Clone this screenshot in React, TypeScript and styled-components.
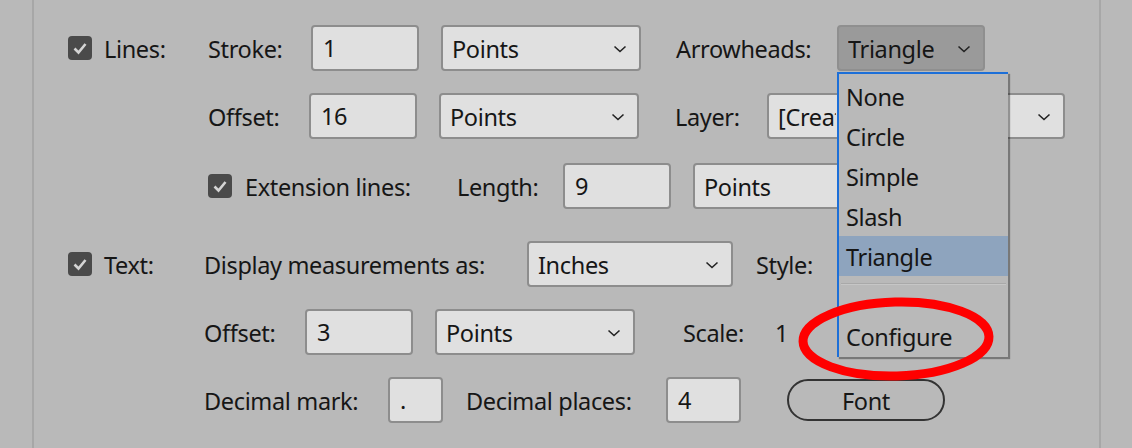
import React from 'react';
import styled, { createGlobalStyle } from 'styled-components';

const GlobalStyle = createGlobalStyle`
  html, body {
    margin: 0;
    padding: 0;
    background: #b9b9b9;
  }
  * {
    box-sizing: border-box;
  }
`;

const Chevron = () => (
  <svg width="14" height="8" viewBox="0 0 14 8">
    <path d="M1.5 1.5 L7 6.5 L12.5 1.5" fill="none" stroke="#222" strokeWidth="1.6" />
  </svg>
);

const CheckBox = ({ gap = 12 }: { gap?: number }) => (
  <CheckSquare $gap={gap}>
    <svg width="24" height="24" viewBox="0 0 24 24">
      <path d="M6.5 12.5 L10.5 16.5 L17.5 8" fill="none" stroke="#d4d4d4" strokeWidth="2.6" />
    </svg>
  </CheckSquare>
);

const SelectBox = ({
  value,
  w,
  dark,
  after,
  clip,
}: {
  value: string;
  w: number;
  dark?: boolean;
  after?: number;
  clip?: number;
}) => (
  <Select $w={w} $dark={dark} $after={after}>
    <SelectText $clip={clip}>{value}</SelectText>
    <Chevron />
  </Select>
);

const menuItems = ['None', 'Circle', 'Simple', 'Slash', 'Triangle'];

const App = () => {
  return (
    <>
      <GlobalStyle />
      <Page>
        <Panel>
          <Row $top={0} $indent={34}>
            <CheckBox />
            <Label $w={104}>Lines:</Label>
            <Label $w={103}>Stroke:</Label>
            <Input $w={108} $after={22}>1</Input>
            <SelectBox value="Points" w={200} after={35} />
            <Label $w={161}>Arrowheads:</Label>
            <SelectBox value="Triangle" w={148} dark />
          </Row>
          <Row $top={22} $indent={174}>
            <Label $w={101}>Offset:</Label>
            <Input $w={108} $after={22}>16</Input>
            <SelectBox value="Points" w={200} after={36} />
            <Label $w={92}>Layer:</Label>
            <SelectBox value="[Create New Layer]" w={298} clip={58} />
          </Row>
          <Row $top={24} $indent={174}>
            <CheckBox gap={13} />
            <Label $w={212}>Extension lines:</Label>
            <Label $w={106}>Length:</Label>
            <Input $w={108} $after={22}>9</Input>
            <SelectBox value="Points" w={200} />
          </Row>
          <Row $top={32} $indent={34}>
            <CheckBox />
            <Label $w={100}>Text:</Label>
            <Label $w={323}>Display measurements as:</Label>
            <SelectBox value="Inches" w={206} after={23} />
            <Label>Style:</Label>
          </Row>
          <Row $top={22} $indent={170}>
            <Label $w={101}>Offset:</Label>
            <Input $w={108} $after={22}>3</Input>
            <SelectBox value="Points" w={200} after={48} />
            <Label $w={92}>Scale:</Label>
            <Label>1</Label>
          </Row>
          <Row $top={22} $indent={170}>
            <Label $w={184}>Decimal mark:</Label>
            <Input $w={55} $after={23}>.</Input>
            <Label $w={200}>Decimal places:</Label>
            <Input $w={75} $after={46}>4</Input>
            <PillButton>Font</PillButton>
          </Row>
        </Panel>

        <Menu>
          {menuItems.map((item) => (
            <MenuItem key={item} $active={item === 'Triangle'}>
              {item}
            </MenuItem>
          ))}
          <Separator />
          <MenuItem>Configure</MenuItem>
        </Menu>

        <Circled width="214" height="96" viewBox="0 0 214 96">
          <ellipse
            cx="106"
            cy="46"
            rx="93"
            ry="37"
            fill="none"
            stroke="#ff0000"
            strokeWidth="9"
            transform="rotate(-1.5 106 46)"
          />
        </Circled>
      </Page>
    </>
  );
};

const Page = styled.div`
  position: relative;
  width: 1132px;
  height: 448px;
  overflow: hidden;
  background: #b9b9b9;
  font-family: 'Noto Sans', 'Open Sans', sans-serif;
  font-size: 23.5px;
  letter-spacing: -0.35px;
  color: #161616;
`;

const Panel = styled.div`
  margin-left: 32px;
  width: 1069px;
  height: 448px;
  border-left: 2px solid #a7a7a7;
  border-right: 2px solid #a7a7a7;
  padding-top: 25px;
  display: flex;
  flex-direction: column;
`;

const Row = styled.div<{ $top: number; $indent: number }>`
  display: flex;
  align-items: center;
  height: 46px;
  margin-top: ${(p) => p.$top}px;
  padding-left: ${(p) => p.$indent}px;
  white-space: nowrap;
`;

const Label = styled.span<{ $w?: number }>`
  width: ${(p) => (p.$w ? `${p.$w}px` : 'auto')};
  flex-shrink: 0;
  padding-top: 2px;
  line-height: 44px;
`;

const CheckSquare = styled.span<{ $gap: number }>`
  display: flex;
  width: 24px;
  height: 24px;
  margin-right: ${(p) => p.$gap}px;
  border-radius: 4px;
  background: #4a4a4a;
  flex-shrink: 0;
`;

const Input = styled.div<{ $w: number; $after?: number }>`
  width: ${(p) => p.$w}px;
  height: 46px;
  margin-right: ${(p) => p.$after ?? 0}px;
  padding-left: 10px;
  display: flex;
  align-items: center;
  background: #e0e0e0;
  border: 2px solid #8d8d8d;
  border-radius: 4px;
  flex-shrink: 0;
`;

const Select = styled.div<{ $w: number; $dark?: boolean; $after?: number }>`
  width: ${(p) => p.$w}px;
  height: 46px;
  margin-right: ${(p) => p.$after ?? 0}px;
  padding: 2px 12px 0 9px;
  display: flex;
  align-items: center;
  justify-content: space-between;
  background: ${(p) => (p.$dark ? '#9a9a9a' : '#e0e0e0')};
  border: 2px solid ${(p) => (p.$dark ? '#8f8f8f' : '#8d8d8d')};
  border-radius: 4px;
  flex-shrink: 0;
  overflow: hidden;
`;

const SelectText = styled.span<{ $clip?: number }>`
  overflow: hidden;
  max-width: ${(p) => (p.$clip ? `${p.$clip}px` : 'none')};
`;

const PillButton = styled.button`
  width: 158px;
  height: 42px;
  border: 2px solid #333;
  border-radius: 21px;
  background: transparent;
  font: inherit;
  letter-spacing: inherit;
  color: #161616;
  padding: 2px 0 0;
`;

const Menu = styled.div`
  position: absolute;
  left: 837px;
  top: 72px;
  width: 171px;
  height: 285px;
  background: #b9b9b9;
  border-top: 2px solid #1c6fd8;
  border-left: 2px solid #1c6fd8;
  box-shadow: 2px 2px 1px rgba(0, 0, 0, 0.35);
  padding-top: 2px;
`;

const MenuItem = styled.div<{ $active?: boolean }>`
  height: 40px;
  line-height: 42px;
  padding-left: 7px;
  background: ${(p) => (p.$active ? '#8ea4be' : 'transparent')};
`;

const Separator = styled.div`
  margin: 7px 2px 31px 2px;
  height: 2px;
  border-top: 1px solid #a9a9a9;
  border-bottom: 1px solid #c6c6c6;
`;

const Circled = styled.svg`
  position: absolute;
  left: 790px;
  top: 293px;
  pointer-events: none;
`;

export default App;
